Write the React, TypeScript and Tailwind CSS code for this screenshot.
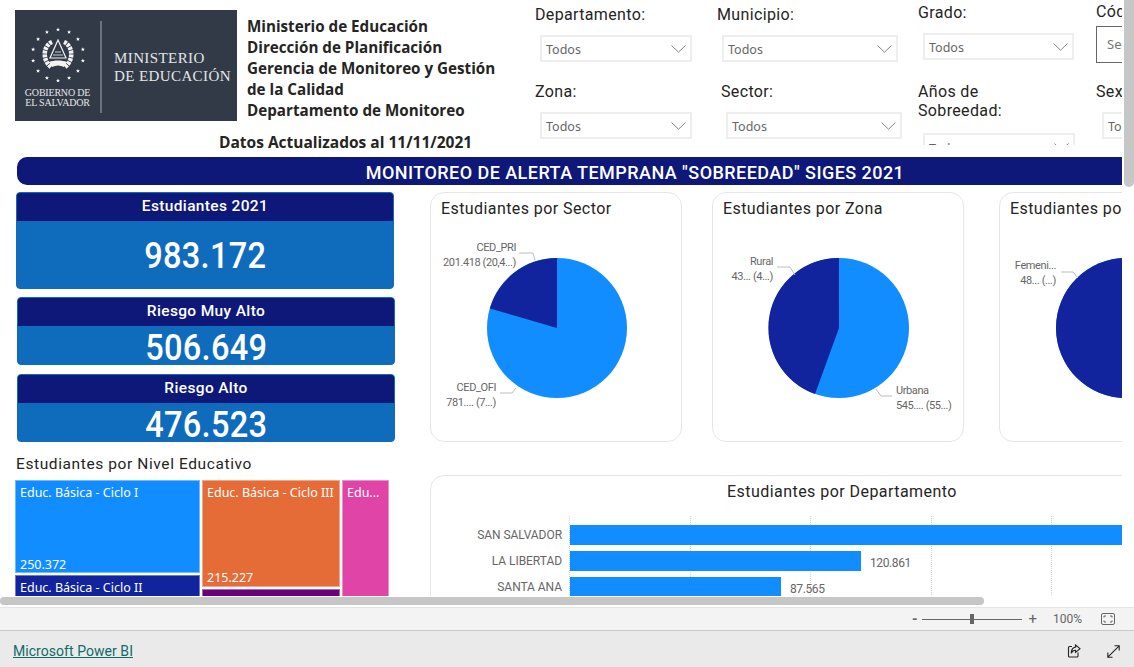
const starAngles = [...Array(14)].map((_, i) => (i * 360) / 14);

const Logo = () => {
    return (
        <div className="w-[222px] h-[111px] shrink-0 flex bg-[#323a47] text-[#e4e6e9] font-['Liberation_Serif',serif]">
            <div className="w-[85px] shrink-0 flex flex-col items-center pt-[14px]">
                <svg width="62" height="62" viewBox="-31 -31 62 62">
                    {starAngles.map((a) => (
                        <polygon
                            key={a}
                            transform={`rotate(${a}) translate(0 -25.5) rotate(${-a})`}
                            points="0,-2 0.6,-0.6 2,-0.6 0.9,0.3 1.3,1.8 0,0.9 -1.3,1.8 -0.9,0.3 -2,-0.6 -0.6,-0.6"
                            fill="#ffffff"
                        />
                    ))}
                    {/* escudo */}
                    <path d="M-6 -13 C-15 -9 -16 5 -7 12" fill="none" stroke="#f2f2f2" strokeWidth="4.5" strokeDasharray="3 0.8" />
                    <path d="M6 -13 C15 -9 16 5 7 12" fill="none" stroke="#f2f2f2" strokeWidth="4.5" strokeDasharray="3 0.8" />
                    <path d="M0 -15 L8 3 L-8 3 Z" fill="#323a47" stroke="#f2f2f2" strokeWidth="1.2" />
                    <path d="M-3 -3 H3 M-5 0 H5" stroke="#c8ccd2" strokeWidth="1.2" />
                    <path d="M-9 7 C-4 5 4 5 9 7 L6 12 C2 10 -2 10 -6 12 Z" fill="#f2f2f2" />
                </svg>
                <div className="mt-[2px] text-center text-[10px] leading-[9.5px] tracking-[-0.2px] whitespace-nowrap">
                    <div>GOBIERNO DE</div>
                    <div>EL SALVADOR</div>
                </div>
            </div>
            <div className="w-[2px] h-[92px] mt-[11px] shrink-0 bg-[#6d737d]" />
            <div className="ml-[12px] pt-[39px] text-[15px] leading-[18px] tracking-[0.4px] whitespace-nowrap">
                <div>MINISTERIO</div>
                <div>DE EDUCACIÓN</div>
            </div>
        </div>
    );
};

const Dropdown = ({ width, clipped }: { width: string; clipped?: boolean }) => {
    return (
        <div className={`${width} h-[27px] shrink-0 flex items-center justify-between pl-[4px] pr-[4px] border-2 border-[#eeeeee] bg-white`}>
            <span className={`font-['Noto_Sans',sans-serif] text-[12.5px] text-[#666666] ${clipped ? 'mt-[6px]' : 'mt-[4px]'}`}>Todos</span>
            <svg width="15" height="8" viewBox="0 0 15 8" fill="none" stroke="#777777" strokeWidth="0.9">
                <path d="M0.5 0.5L7.5 7.2L14.5 0.5" />
            </svg>
        </div>
    );
};

const Filter = ({ label, width, className, gap }: { label: string; width: string; className?: string; gap: string }) => {
    return (
        <div className={className}>
            <div className="text-[16px] leading-[20px] tracking-[0.35px] text-[#252423] whitespace-nowrap">{label}</div>
            <div className={`ml-[5px] ${gap}`}>
                <Dropdown width={width} />
            </div>
        </div>
    );
};

const Filters = () => {
    return (
        <div className="h-[145px] overflow-hidden flex shrink-0 w-[587px]">
            <div className="w-[182px] shrink-0 pt-[5px]">
                <Filter label="Departamento:" width="w-[152px]" gap="mt-[10px]" />
                <Filter label="Zona:" width="w-[152px]" className="mt-[20px]" gap="mt-[10px]" />
            </div>
            <div className="w-[201px] shrink-0 pt-[5px]">
                <Filter label="Municipio:" width="w-[176px]" gap="mt-[10px]" />
                <Filter label="Sector:" width="w-[176px]" className="mt-[20px] ml-[4px]" gap="mt-[10px]" />
            </div>
            <div className="w-[178px] shrink-0 pt-[3px]">
                <Filter label="Grado:" width="w-[151px]" gap="mt-[10px]" />
                <div className="mt-[22px] text-[16px] leading-[19px] tracking-[0.35px] text-[#252423]">
                    Años de
                    <br />
                    Sobreedad:
                </div>
                <div className="ml-[5px] mt-[13px]">
                    <Dropdown width="w-[152px]" clipped />
                </div>
            </div>
            <div className="w-[100px] shrink-0">
                <div className="h-[26px] text-[16px] leading-[24px] tracking-[0.35px] text-[#252423]">Código</div>
                <div className="h-[37px] w-[60px] pl-[10px] flex items-center border border-[#666666] font-['Noto_Sans',sans-serif] text-[13px] text-[#777777] whitespace-nowrap">
                    Seleccionar
                </div>
                <div className="mt-[19px] text-[16px] leading-[20px] tracking-[0.35px] text-[#252423]">Sexo:</div>
                <div className="ml-[6px] mt-[10px]">
                    <Dropdown width="w-[120px]" />
                </div>
            </div>
        </div>
    );
};

const Kpi = ({ title, value, big, className }: { title: string; value: string; big?: boolean; className?: string }) => {
    return (
        <div className={`w-[378px] ${big ? 'h-[97px]' : 'h-[68px]'} rounded-[4px] overflow-hidden flex flex-col border border-[#0f6cbd] bg-[#0f6cbd] text-white text-center ${className ?? ''}`}>
            <div className="h-[28px] shrink-0 bg-[#0d1878] text-[15.5px] font-medium leading-[26px] tracking-[0.35px]">{title}</div>
            <div className={`flex-1 flex items-center justify-center ${big ? 'pt-[2px]' : 'pt-[3px]'}`}>
                <span className="inline-block scale-x-[0.88] text-[37px] font-medium leading-none tracking-[0.3px]">{value}</span>
            </div>
        </div>
    );
};

const Treemap = () => {
    return (
        <div className="mt-[6px] ml-[15px] w-[374px] h-[200px] flex gap-[2px] font-['Noto_Sans',sans-serif] text-[12.5px] text-white">
            <div className="w-[185px] flex flex-col gap-[2px]">
                <div className="h-[93px] shrink-0 flex flex-col justify-between px-[4px] pt-[3px] bg-[#118dff] border border-[#70bbff]">
                    <div>Educ. Básica - Ciclo I</div>
                    <div className="-mb-[3px]">250.372</div>
                </div>
                <div className="flex-1 px-[4px] pt-[3px] bg-[#12239e] border border-[#7079c5]">Educ. Básica - Ciclo II</div>
            </div>
            <div className="w-[138px] flex flex-col gap-[2px]">
                <div className="h-[107px] shrink-0 flex flex-col justify-between px-[4px] pt-[3px] bg-[#e66c37] border border-[#f0a787] whitespace-nowrap">
                    <div>Educ. Básica - Ciclo III</div>
                    <div className="-mb-[2px]">215.227</div>
                </div>
                <div className="flex-1 bg-[#6b007b] border border-[#a666b0]" />
            </div>
            <div className="w-[47px] px-[4px] pt-[3px] bg-[#e044a7] border border-[#ec8fca]">Edu...</div>
        </div>
    );
};

type PieLabel = { lines: [string, string]; x: number; y: number; anchor: 'start' | 'end'; leader: string };

const PieCard = ({
    title,
    view,
    cx,
    slice,
    labels,
    className
}: {
    title: string;
    view: string;
    cx: number;
    slice: string;
    labels: PieLabel[];
    className?: string;
}) => {
    return (
        <div className={`w-[252px] h-[250px] shrink-0 rounded-[14px] border border-[#e6e6e6] ${className ?? ''}`}>
            <div className="h-[32px] pl-[10px] text-[16px] leading-[31px] tracking-[0.42px] text-[#252423] whitespace-nowrap">{title}</div>
            <svg width="250" height="216" viewBox={view} className="block">
                <circle cx={cx} cy={328} r={70} fill="#118dff" />
                <path d={slice} fill="#12239e" />
                {labels.map((l) => (
                    <g key={l.lines[0]}>
                        <polyline points={l.leader} fill="none" stroke="#bdbdbd" strokeWidth="1" />
                        <text x={l.x} y={l.y} textAnchor={l.anchor} fontSize="11" fill="#666666" className="font-['Roboto',sans-serif] tracking-[-0.4px]">
                            {l.lines[0]}
                        </text>
                        <text x={l.x} y={l.y + 15} textAnchor={l.anchor} fontSize="11" fill="#666666" className="font-['Roboto',sans-serif] tracking-[-0.4px]">
                            {l.lines[1]}
                        </text>
                    </g>
                ))}
            </svg>
        </div>
    );
};

const departamentos = [
    { name: 'SAN SALVADOR', value: '', bar: 'w-[660px]' },
    { name: 'LA LIBERTAD', value: '120.861', bar: 'w-[291px]' },
    { name: 'SANTA ANA', value: '87.565', bar: 'w-[211px]' },
    { name: 'SAN MIGUEL', value: '79.110', bar: 'w-[190px]' }
];

const DeptCard = () => {
    return (
        <div className="mt-[33px] w-[824px] h-[300px] rounded-tl-[14px] rounded-tr-[14px] border border-[#e6e6e6]">
            <div className="h-[31px] text-center text-[16px] leading-[31px] tracking-[0.45px] text-[#252423]">Estudiantes por Departamento</div>
            <div className="relative mt-[9px] pt-[9px]">
                {/* lineas de la grilla */}
                <div className="absolute top-0 bottom-0 left-[138px] flex">
                    {[...Array(6)].map((_, i) => (
                        <div key={i} className="w-[120.5px] h-full border-l border-dotted border-[#d4d4d4]" />
                    ))}
                </div>
                <div className="relative flex flex-col gap-[6px]">
                    {departamentos.map((d) => (
                        <div key={d.name} className="flex items-center h-[20px]">
                            <div className="w-[131px] shrink-0 text-right text-[12px] tracking-[-0.05px] text-[#666666]">{d.name}</div>
                            <div className={`ml-[8px] h-full bg-[#118dff] shrink-0 ${d.bar}`} />
                            <div className="ml-[9px] mt-[3px] text-[12px] tracking-[-0.4px] text-[#666666]">{d.value}</div>
                        </div>
                    ))}
                </div>
            </div>
        </div>
    );
};

const ZoomBar = () => {
    return (
        <div className="h-[23px] shrink-0 flex items-center justify-end bg-[#f3f3f3] border-t border-[#e4e4e4] text-[#666666]">
            <span className="text-[14px] font-bold mr-[4px] leading-none">-</span>
            <div className="relative w-[100px] h-px bg-[#666666] flex justify-center ml-[1px]">
                <div className="absolute -top-[5px] w-[4px] h-[10px] bg-[#666666]" />
            </div>
            <span className="ml-[6px] text-[15px] leading-none">+</span>
            <span className="ml-[16px] text-[12px] font-['Roboto',sans-serif]">100%</span>
            <svg className="ml-[19px] mr-[19px]" width="14" height="12" viewBox="0 0 14 12" fill="none" stroke="#666666">
                <rect x="0.5" y="0.5" width="13" height="11" rx="1.5" />
                <path d="M3 4.5V3H5M9 3H11V4.5M11 7.5V9H9M5 9H3V7.5" />
            </svg>
        </div>
    );
};

const App = () => {
    return (
        <div className="w-[1134px] h-[667px] overflow-hidden flex flex-col bg-white font-['Roboto',sans-serif]">
            <div className="relative h-[607px] shrink-0">
                <div className="w-[1122px] h-[596px] overflow-hidden">
                    <div className="flex h-[157px]">
                        <div className="w-[535px] shrink-0 pl-[15px] pt-[10px]">
                            <div className="flex gap-[10px]">
                                <Logo />
                                <div className="pt-[6px] font-['Open_Sans',sans-serif] font-bold text-[15.2px] leading-[21px] text-[#252423] whitespace-nowrap">
                                    <div>Ministerio de Educación</div>
                                    <div>Dirección de Planificación</div>
                                    <div>Gerencia de Monitoreo y Gestión</div>
                                    <div>de la Calidad</div>
                                    <div>Departamento de Monitoreo</div>
                                </div>
                            </div>
                            <div className="mt-[11px] pl-[204px] font-['Open_Sans',sans-serif] font-bold text-[15.5px] leading-[21px] text-[#252423] whitespace-nowrap">
                                Datos Actualizados al 11/11/2021
                            </div>
                        </div>
                        <Filters />
                    </div>

                    <div className="ml-[17px] w-[1236px] h-[28px] rounded-[10px] bg-[#0d1878] text-center text-white text-[18px] font-medium leading-[31px] tracking-[0.45px] whitespace-nowrap">
                        MONITOREO DE ALERTA TEMPRANA "SOBREEDAD" SIGES 2021
                    </div>

                    <div className="flex mt-[7px]">
                        <div className="w-[430px] shrink-0">
                            <Kpi title="Estudiantes 2021" value="983.172" big className="ml-[16px]" />
                            <Kpi title="Riesgo Muy Alto" value="506.649" className="ml-[17px] mt-[8px]" />
                            <Kpi title="Riesgo Alto" value="476.523" className="ml-[17px] mt-[9px]" />
                            <div className="mt-[12px] ml-[16px] text-[15.5px] leading-[20px] tracking-[0.6px] text-[#252423]">Estudiantes por Nivel Educativo</div>
                            <Treemap />
                        </div>
                        <div className="w-[830px] shrink-0">
                            <div className="flex">
                                <PieCard
                                    title="Estudiantes por Sector"
                                    view="431 225 250 216"
                                    cx={557}
                                    slice="M557 328 L557 258 A70 70 0 0 0 489.8 308.5 Z"
                                    labels={[
                                        { lines: ['CED_PRI', '201.418 (20,4...)'], x: 516, y: 251, anchor: 'end', leader: '519,253 533,253 535,260' },
                                        { lines: ['CED_OFI', '781.... (7...)'], x: 496, y: 391, anchor: 'end', leader: '500,393 512,393 516,388' }
                                    ]}
                                />
                                <PieCard
                                    title="Estudiantes por Zona"
                                    view="713 225 250 216"
                                    cx={839}
                                    slice="M839 328 L839 258 A70 70 0 0 0 815 394 Z"
                                    className="ml-[30px]"
                                    labels={[
                                        { lines: ['Rural', '43... (4...)'], x: 773, y: 265, anchor: 'end', leader: '777,267 790,267 795,275' },
                                        { lines: ['Urbana', '545.... (55...)'], x: 896, y: 394, anchor: 'start', leader: '876,389 881,396 892,396' }
                                    ]}
                                />
                                <PieCard
                                    title="Estudiantes por Sexo"
                                    view="1000 225 250 216"
                                    cx={1126}
                                    slice="M1126 328 L1126 258 A70 70 0 0 0 1126 398 Z"
                                    className="ml-[35px]"
                                    labels={[
                                        { lines: ['Femeni...', '48... (...)'], x: 1056, y: 269, anchor: 'end', leader: '1061,272 1073,272 1078,278' }
                                    ]}
                                />
                            </div>
                            <DeptCard />
                        </div>
                    </div>
                </div>

                {/* barras de desplazamiento */}
                <div className="absolute left-0 top-[597px] w-[984px] h-[8px] rounded-full bg-[#c6c6c6]" />
                <div className="absolute right-0 top-0 w-[10px] h-[187px] rounded-b-full bg-[#c6c6c6]" />
            </div>

            <ZoomBar />

            <div className="flex-1 flex items-center justify-between border-t border-[#c8c8c8] bg-[#eaeaea] pl-[13px] pr-[14px]">
                <a className="text-[14px] tracking-[0.05px] text-[#106a6a] underline mt-[4px]">Microsoft Power BI</a>
                <div className="flex items-center gap-[26px] mt-[4px]">
                    <svg width="14" height="14" viewBox="0 0 14 14" fill="none" stroke="#252423" strokeWidth="1.1">
                        <path d="M5 2.5H2.5A1 1 0 0 0 1.5 3.5V12A1 1 0 0 0 2.5 13H10A1 1 0 0 0 11 12V8.5" />
                        <path d="M8.5 1L13 4.7L8.5 8.4V6.3C6.5 6.3 5 7.3 4.3 9.3C4.3 5.8 6 3.4 8.5 3.1Z" />
                    </svg>
                    <svg width="13" height="13" viewBox="0 0 13 13" fill="none" stroke="#252423" strokeWidth="1.1">
                        <path d="M0.8 12.2L12.2 0.8M7.5 0.8H12.2V5.5M0.8 7.5V12.2H5.5" />
                    </svg>
                </div>
            </div>
        </div>
    );
};

export default App;
